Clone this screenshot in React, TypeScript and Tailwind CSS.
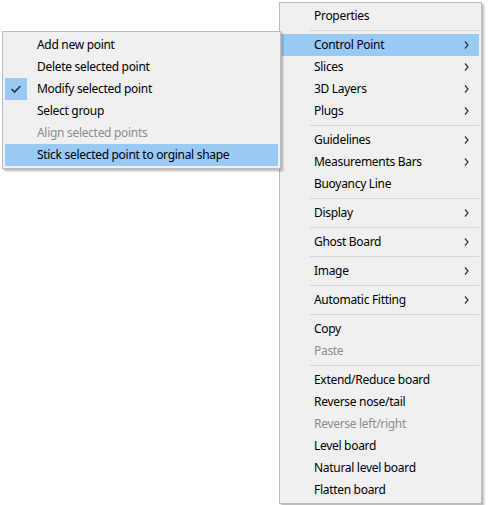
import React from 'react';

type Item =
  | { type: 'sep' }
  | { type: 'item'; label: string; sub?: boolean; disabled?: boolean; active?: boolean; checked?: boolean };

const mainItems: Item[] = [
  { type: 'item', label: 'Properties' },
  { type: 'sep' },
  { type: 'item', label: 'Control Point', sub: true, active: true },
  { type: 'item', label: 'Slices', sub: true },
  { type: 'item', label: '3D Layers', sub: true },
  { type: 'item', label: 'Plugs', sub: true },
  { type: 'sep' },
  { type: 'item', label: 'Guidelines', sub: true },
  { type: 'item', label: 'Measurements Bars', sub: true },
  { type: 'item', label: 'Buoyancy Line' },
  { type: 'sep' },
  { type: 'item', label: 'Display', sub: true },
  { type: 'sep' },
  { type: 'item', label: 'Ghost Board', sub: true },
  { type: 'sep' },
  { type: 'item', label: 'Image', sub: true },
  { type: 'sep' },
  { type: 'item', label: 'Automatic Fitting', sub: true },
  { type: 'sep' },
  { type: 'item', label: 'Copy' },
  { type: 'item', label: 'Paste', disabled: true },
  { type: 'sep' },
  { type: 'item', label: 'Extend/Reduce board' },
  { type: 'item', label: 'Reverse nose/tail' },
  { type: 'item', label: 'Reverse left/right', disabled: true },
  { type: 'item', label: 'Level board' },
  { type: 'item', label: 'Natural level board' },
  { type: 'item', label: 'Flatten board' },
];

const subItems: Item[] = [
  { type: 'item', label: 'Add new point' },
  { type: 'item', label: 'Delete selected point' },
  { type: 'item', label: 'Modify selected point', checked: true },
  { type: 'item', label: 'Select group' },
  { type: 'item', label: 'Align selected points', disabled: true },
  { type: 'item', label: 'Stick selected point to orginal shape', active: true },
];

const Chevron = () => (
  <svg width="5" height="8" viewBox="0 0 5 8" className="ml-auto">
    <polyline points="1,0.5 4,4 1,7.5" fill="none" stroke="#333" strokeWidth="1.2" />
  </svg>
);

const Check = () => (
  <div className="absolute left-0 top-0 w-[22px] h-[22px] bg-[#99c9f5] flex items-center justify-center">
    <svg width="12" height="10" viewBox="0 0 12 10">
      <polyline points="1.5,5 4.5,8 10.5,2" fill="none" stroke="#333" strokeWidth="1.6" />
    </svg>
  </div>
);

const MenuList = ({ items }: { items: Item[] }) => (
  <div className="p-[2px]">
    {items.map((it, i) =>
      it.type === 'sep' ? (
        <div key={i} className="h-[7px] flex items-center pl-[28px]">
          <div className="h-px w-full bg-[#d7d7d7]" />
        </div>
      ) : (
        <div
          key={i}
          className={`relative h-[22px] flex items-center pl-[32px] pr-[10px] whitespace-nowrap ${
            it.active ? 'bg-[#99c9f5]' : ''
          } ${it.disabled ? 'text-[#8d8d8d]' : 'text-black'}`}
        >
          {it.checked && <Check />}
          <span>{it.label}</span>
          {it.sub && <Chevron />}
        </div>
      )
    )}
  </div>
);

export default function App() {
  return (
    <div
      className="relative w-[488px] h-[505px] bg-white text-[12px] leading-none tracking-[-0.3px] pt-[2px] pl-[279px]"
      style={{ fontFamily: '"Noto Sans", "Segoe UI", sans-serif' }}
    >
      {/* main context menu */}
      <div className="w-[203px] bg-[#f0f0f0] border border-[#bcbcbc] shadow-[2px_2px_2px_rgba(0,0,0,0.28)]">
        <MenuList items={mainItems} />
      </div>

      {/* Control Point submenu, drawn over the main menu */}
      <div className="absolute left-[2px] top-[31px] w-[279px] bg-[#f0f0f0] border border-[#bcbcbc] shadow-[2px_2px_2px_rgba(0,0,0,0.28)]">
        <MenuList items={subItems} />
      </div>
    </div>
  );
}
